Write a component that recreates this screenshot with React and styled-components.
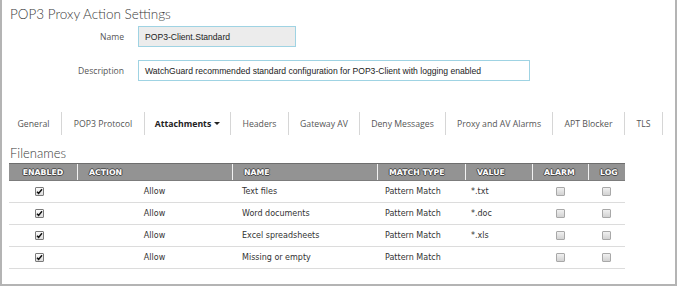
import React from "react";
import styled, { createGlobalStyle } from "styled-components";

const Global = createGlobalStyle`
  html, body { margin: 0; padding: 0; background: #fff; }
  body { font-family: "Open Sans", "Liberation Sans", sans-serif; }
`;

const Frame = styled.div`
  box-sizing: border-box;
  width: 677px;
  height: 286px;
  border: 2px solid #b4b4b4;
  border-top: none;
  padding: 0 0 0 4px;
  overflow: hidden;
`;

const Title = styled.h1`
  margin: 0;
  padding: 4px 0 0 4px;
  height: 22px;
  font-family: "Lato", sans-serif;
  font-weight: 300;
  font-size: 13.5px;
  line-height: 20px;
  color: #3a3a3a;
`;

const Form = styled.div`
  display: grid;
  grid-template-columns: 118px auto;
  column-gap: 14px;
  row-gap: 13px;
  align-items: center;
  justify-items: start;
`;

const Label = styled.label`
  justify-self: end;
  font-size: 8.6px;
  color: #555;
`;

const Input = styled.div`
  box-sizing: border-box;
  width: ${(p) => p.$w}px;
  height: 21px;
  padding: 0 6px;
  display: flex;
  align-items: center;
  border: 1px solid #9fd3e3;
  background: ${(p) => (p.$disabled ? "#ececec" : "#fff")};
  font-family: "Liberation Sans", Arial, sans-serif;
  font-size: 8.6px;
  color: #222;
  white-space: nowrap;
`;

const Tabs = styled.div`
  display: flex;
  margin-top: 31px;
  height: 23px;
`;

const Tab = styled.div`
  box-sizing: border-box;
  width: ${(p) => p.$w}px;
  display: flex;
  align-items: center;
  justify-content: center;
  gap: 3px;
  border-right: 1px solid #d6d6d6;
  font-size: 8.7px;
  color: ${(p) => (p.$active ? "#222" : "#555")};
  font-weight: ${(p) => (p.$active ? 700 : 400)};
  white-space: nowrap;
`;

const Caret = styled.span`
  width: 0;
  height: 0;
  border-left: 3px solid transparent;
  border-right: 3px solid transparent;
  border-top: 3px solid #222;
`;

const Section = styled.h2`
  margin: 8px 0 0 4px;
  height: 20px;
  font-family: "Lato", sans-serif;
  font-weight: 300;
  font-size: 13px;
  line-height: 20px;
  color: #3a3a3a;
`;

const Table = styled.div`
  margin-left: 3px;
  width: 616px;
  font-family: "DejaVu Sans", Verdana, sans-serif;
`;

const cols = "68px 155px 145px 88px 67px 56px 37px";

const HeadRow = styled.div`
  display: grid;
  grid-template-columns: ${cols};
  height: 18px;
  box-sizing: border-box;
  background: #939393;
  border-top: 1px solid #6e6e6e;
  border-bottom: 1px solid #7c7c7c;
`;

const HeadCell = styled.div`
  display: flex;
  align-items: center;
  padding-left: ${(p) => (p.$center ? 0 : 11)}px;
  justify-content: ${(p) => (p.$center ? "center" : "flex-start")};
  border-left: ${(p) => (p.$first ? "none" : "1px solid #f2f2f2")};
  font-size: 7.8px;
  font-weight: 700;
  color: #fff;
  text-shadow: -1px 0 #4a4a4a, 1px 0 #4a4a4a, 0 -1px #4a4a4a, 0 1px #4a4a4a;
  white-space: nowrap;
`;

const Row = styled.div`
  display: grid;
  grid-template-columns: ${cols};
  height: 22px;
  box-sizing: border-box;
  border-bottom: 1px solid #dcdcdc;
`;

const Cell = styled.div`
  display: flex;
  align-items: center;
  justify-content: ${(p) => (p.$center ? "center" : "flex-start")};
  padding-left: ${(p) => p.$pl || 0}px;
  padding-right: ${(p) => p.$pr || 0}px;
  font-size: 8px;
  color: #333;
  white-space: nowrap;
`;

const Box = styled.span`
  box-sizing: border-box;
  width: 9px;
  height: 9px;
  border: 1px solid ${(p) => (p.$checked ? "#7a7a7a" : "#a8a8a8")};
  border-radius: 1px;
  background: ${(p) =>
    p.$checked
      ? "linear-gradient(#fdfdfd, #dcdcdc)"
      : "linear-gradient(#f0f0f0, #d2d2d2)"};
  display: flex;
  align-items: center;
  justify-content: center;
`;

const Check = ({ checked }) => (
  <Box $checked={checked}>
    {checked && (
      <svg width="7" height="7" viewBox="0 0 7 7">
        <path d="M1 3.8 L2.6 5.4 L6 1.2" fill="none" stroke="#111" strokeWidth="1.5" />
      </svg>
    )}
  </Box>
);

const tabs = [
  ["General", 56],
  ["POP3 Protocol", 83],
  ["Attachments", 86, true],
  ["Headers", 58],
  ["Gateway AV", 71],
  ["Deny Messages", 86],
  ["Proxy and AV Alarms", 107],
  ["APT Blocker", 72],
  ["TLS", 38],
];

const rows = [
  ["Text files", "*.txt"],
  ["Word documents", "*.doc"],
  ["Excel spreadsheets", "*.xls"],
  ["Missing or empty", ""],
];

export default function App() {
  return (
    <>
      <Global />
      <Frame>
        <Title>POP3 Proxy Action Settings</Title>
        <Form>
          <Label>Name</Label>
          <Input $w={158} $disabled>POP3-Client.Standard</Input>
          <Label>Description</Label>
          <Input $w={392}>
            WatchGuard recommended standard configuration for POP3-Client with logging enabled
          </Input>
        </Form>
        <Tabs>
          {tabs.map(([t, w, active]) => (
            <Tab key={t} $w={w} $active={active}>
              {t}
              {active && <Caret />}
            </Tab>
          ))}
        </Tabs>
        <Section>Filenames</Section>
        <Table>
          <HeadRow>
            <HeadCell $first $center>ENABLED</HeadCell>
            <HeadCell>ACTION</HeadCell>
            <HeadCell>NAME</HeadCell>
            <HeadCell>MATCH TYPE</HeadCell>
            <HeadCell>VALUE</HeadCell>
            <HeadCell>ALARM</HeadCell>
            <HeadCell>LOG</HeadCell>
          </HeadRow>
          {rows.map(([name, value]) => (
            <Row key={name}>
              <Cell $center $pr={8}>
                <Check checked />
              </Cell>
              <Cell $center>Allow</Cell>
              <Cell $pl={10}>{name}</Cell>
              <Cell $pl={8}>Pattern Match</Cell>
              <Cell $pl={6}>{value}</Cell>
              <Cell $center>
                <Check />
              </Cell>
              <Cell $center>
                <Check />
              </Cell>
            </Row>
          ))}
        </Table>
      </Frame>
    </>
  );
}
